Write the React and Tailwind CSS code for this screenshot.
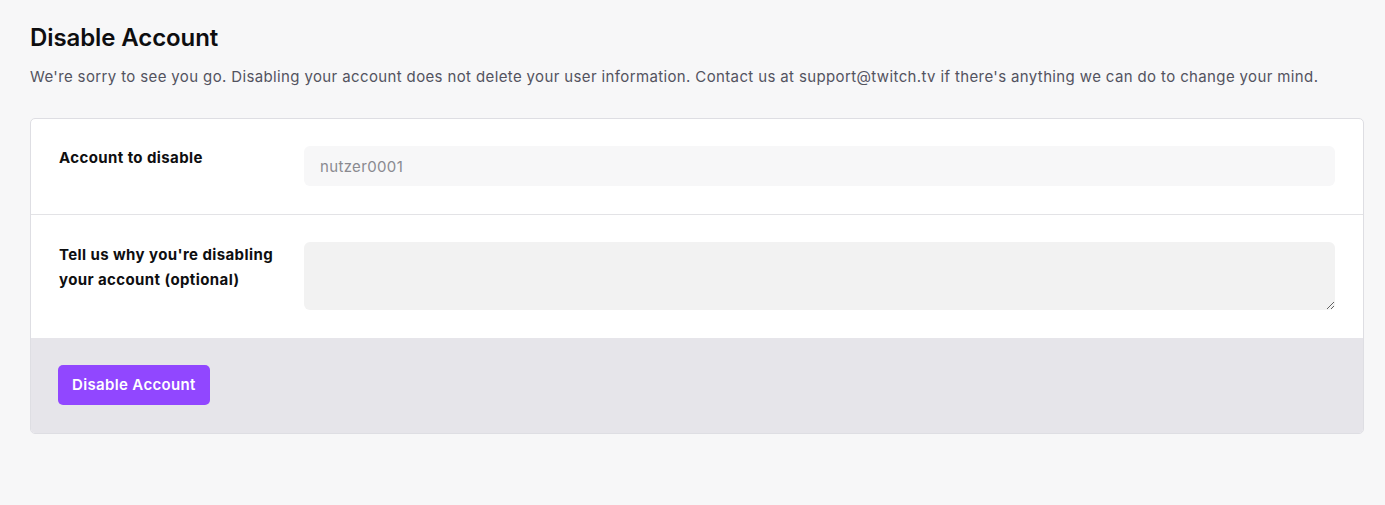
import React from 'react';

export default function App() {
  return (
    <div
      className="min-h-[505px] bg-[#f7f7f8] px-[30px] pt-[23px] pb-10 text-[#0e0e10]"
      style={{ fontFamily: 'Inter, "Noto Sans", sans-serif' }}
    >
      {/* Header */}
      <h1 className="text-[24px] leading-[30px] font-semibold tracking-[-0.1px]">Disable Account</h1>
      <p className="mt-[13px] text-[15px] leading-[22px] tracking-[0.37px] text-[#53535f]">
        We're sorry to see you go. Disabling your account does not delete your user information. Contact us at support@twitch.tv if there's anything we can do to change your mind.
      </p>

      {/* Card */}
      <div className="mt-[30px] w-[1334px] overflow-hidden rounded-[5px] border border-[#dedee3] bg-white">
        <div className="flex border-b border-[#e3e3e6] px-[28px] pt-[27px] pb-[28px]">
          <label className="w-[245px] shrink-0 text-[15px] leading-[24px] font-bold tracking-[0.4px]">Account to disable</label>
          <div className="flex h-[40px] flex-1 items-center rounded-[6px] bg-[#f7f7f8] px-[16px] pt-[2px] text-[15px] tracking-[0.35px] text-[#8a8a90]">
            nutzer0001
          </div>
        </div>
        <div className="flex px-[28px] pt-[27px] pb-[28px]">
          <label className="w-[245px] shrink-0 pr-[20px] text-[15px] leading-[25px] font-bold tracking-[0.4px]">
            Tell us why you're disabling your account (optional)
          </label>
          <textarea className="block h-[68px] flex-1 rounded-[6px] bg-[#f2f2f2] px-[16px] py-[10px] text-[15px] outline-none" />
        </div>
        <div className="bg-[#e6e5ea] px-[27px] pt-[27px] pb-[28px]">
          <button className="block h-[40px] rounded-[5px] bg-[#9147ff] px-[14px] text-[15px] font-semibold tracking-[0.35px] text-white">
            Disable Account
          </button>
        </div>
      </div>
    </div>
  );
}
